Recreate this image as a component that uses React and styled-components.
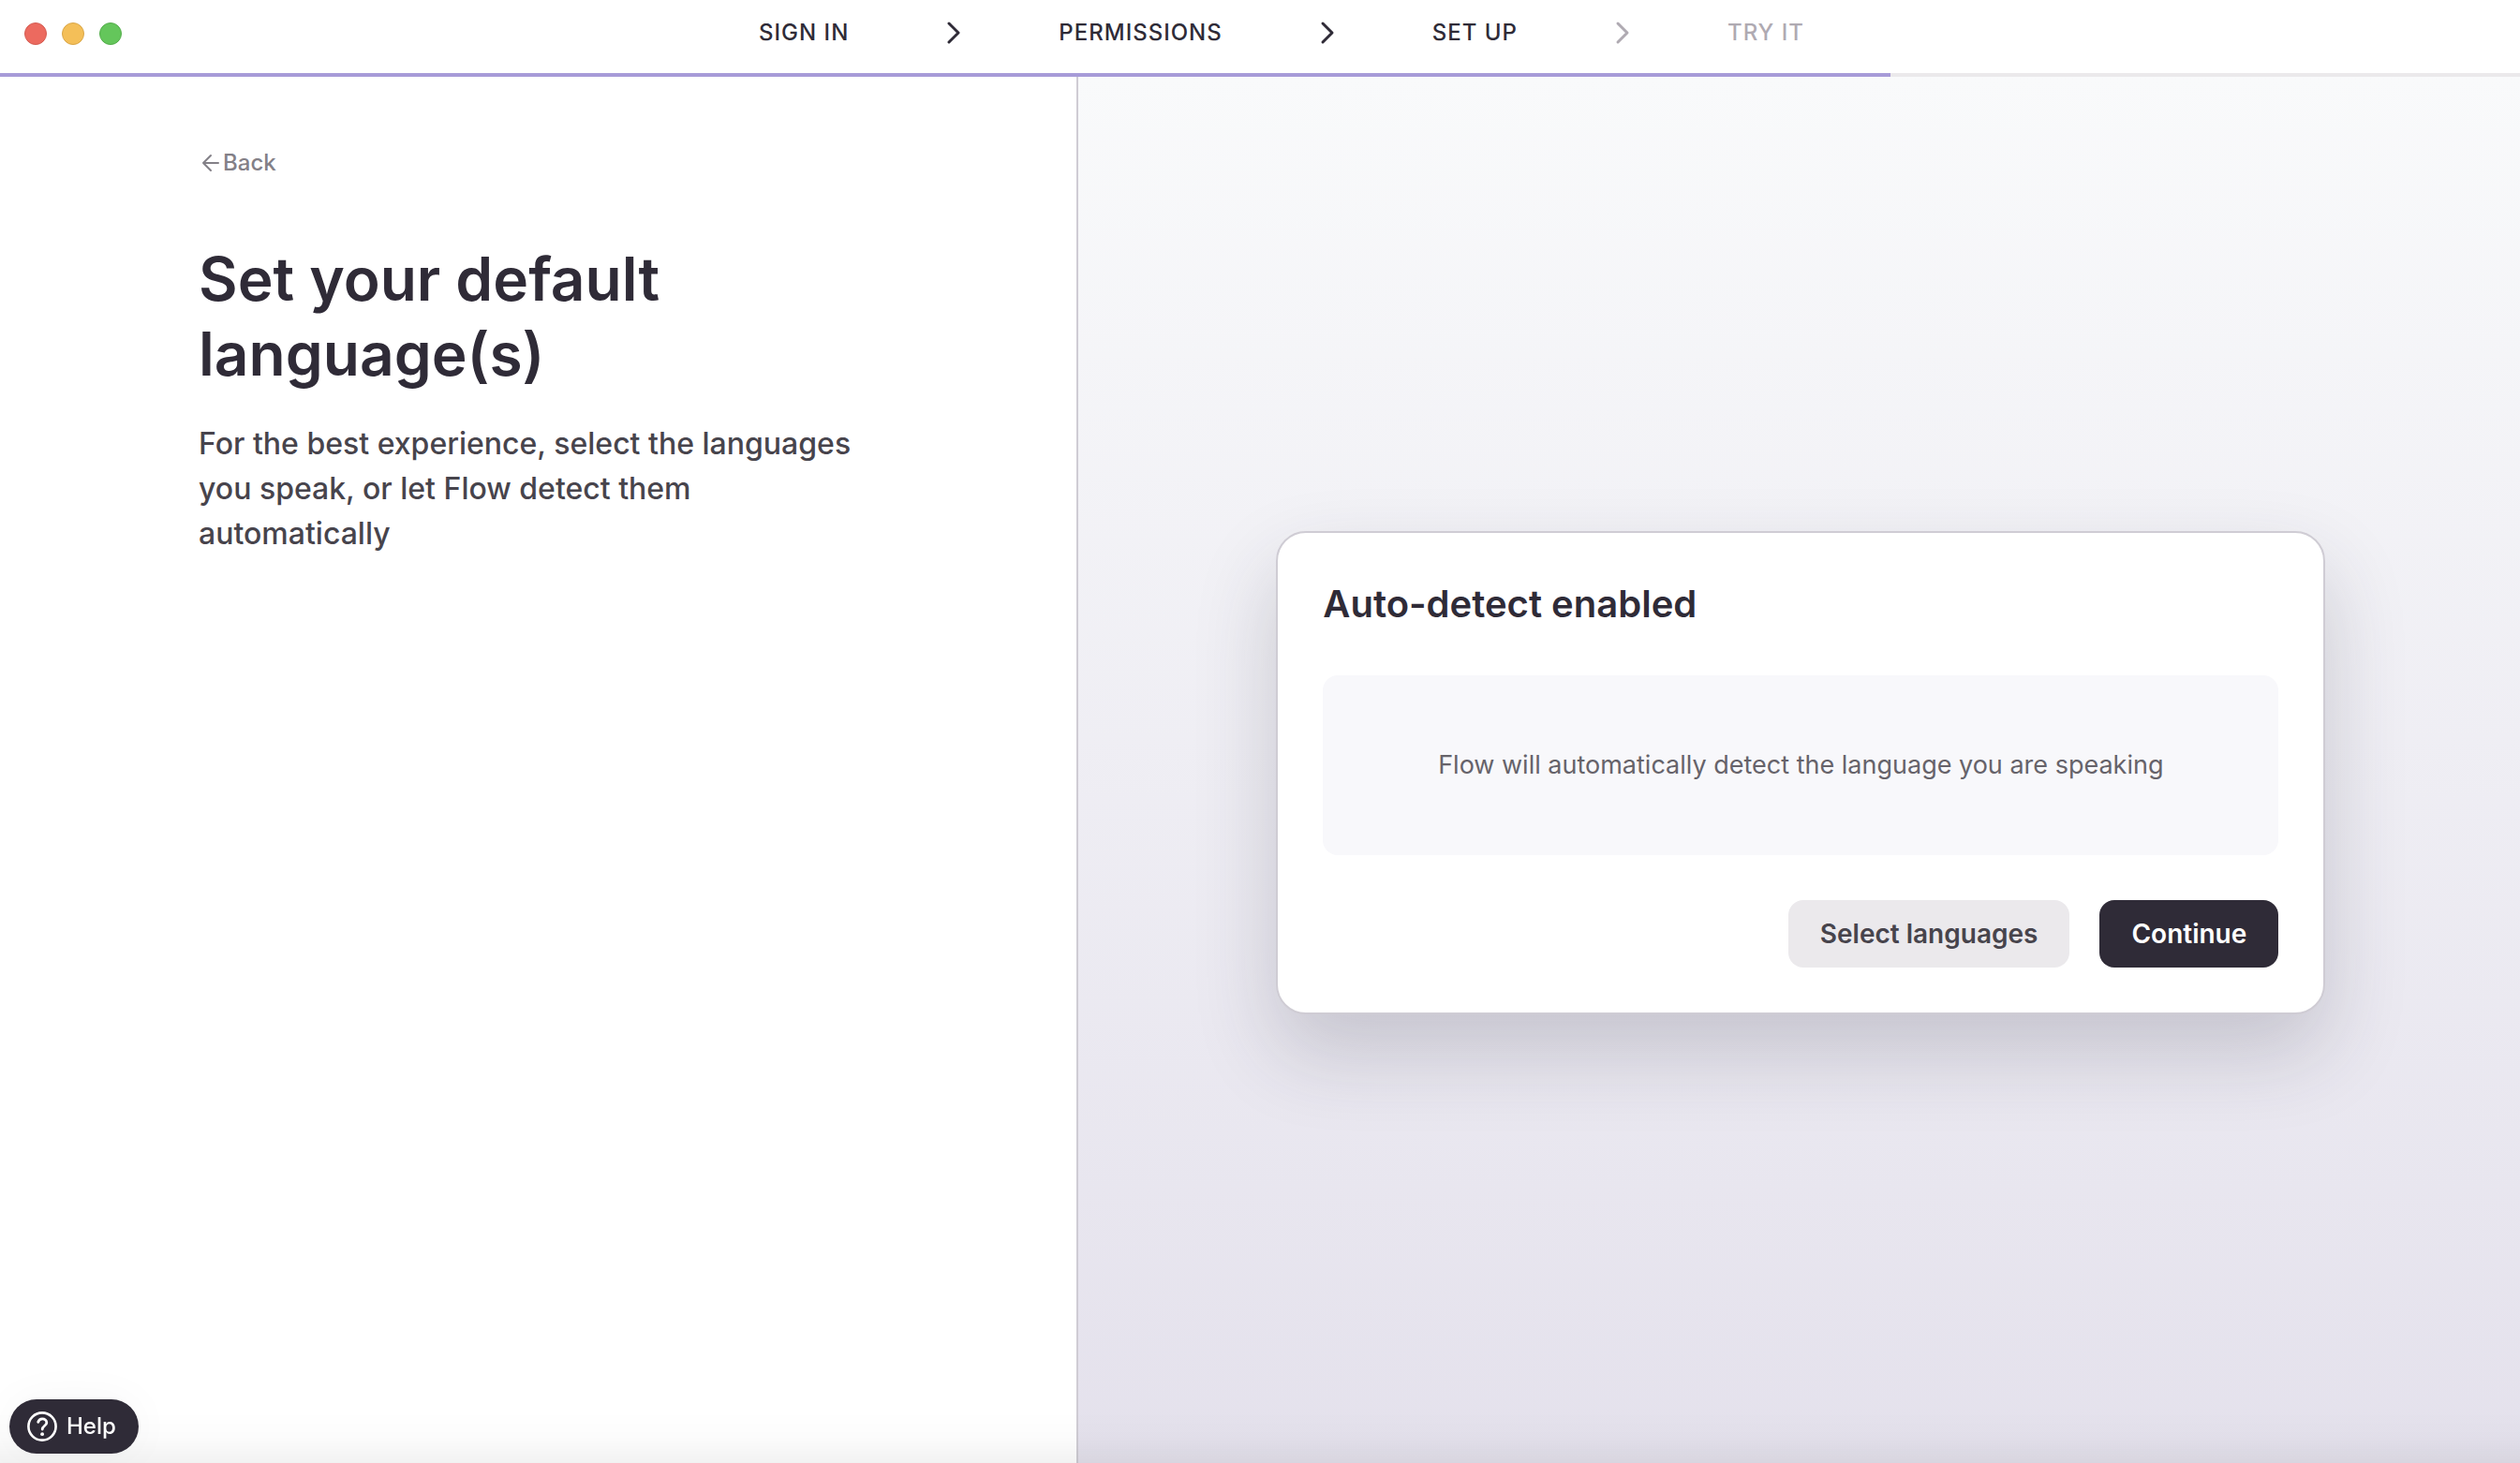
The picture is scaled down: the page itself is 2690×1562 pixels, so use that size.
import React from "react";
import styled, { createGlobalStyle } from "styled-components";

const ink = "#2f2b37";

const GlobalStyle = createGlobalStyle`
  * { box-sizing: border-box; }
  body {
    margin: 0;
    background: #fff;
    color: ${ink};
    font-family: Inter, "Liberation Sans", sans-serif;
  }
  h1, h2, p, ol { margin: 0; padding: 0; }
  button { font: inherit; border: 0; cursor: pointer; }
`;

const Page = styled.div`
  display: flex;
  flex-direction: column;
  min-height: 100vh;
`;

const Header = styled.header`
  display: grid;
  grid-template-columns: 1fr auto 1fr;
  align-items: center;
  height: 78px;
  padding: 0 26px 8px;
`;

const WindowControls = styled.div`
  display: flex;
  gap: 16px;
  padding-top: 2px;
`;

const Dot = styled.button`
  width: 24px;
  height: 24px;
  padding: 0;
  border-radius: 50%;
  background: ${(p) => p.$color};
  border: 1px solid ${(p) => p.$edge};
`;

const Steps = styled.ol`
  display: flex;
  align-items: center;
  gap: 100px;
  padding-left: 46px;
  list-style: none;
`;

const Step = styled.li`
  display: flex;
  align-items: center;
  font-size: 24px;
  line-height: 32px;
  font-weight: 500;
  letter-spacing: 1px;
  color: ${(p) => (p.$muted ? "#afaab2" : ink)};
`;

const Progress = styled.div`
  height: 4px;
  background: #ebe9eb;
`;

const ProgressFill = styled.div`
  width: 75%;
  height: 100%;
  background: #a79bd8;
`;

const Main = styled.main`
  display: flex;
  flex: 1;
`;

const Intro = styled.section`
  display: flex;
  flex-direction: column;
  align-items: flex-start;
  width: 42.7%;
  padding: 76px 212px;
`;

const BackButton = styled.button`
  display: flex;
  align-items: center;
  gap: 2px;
  padding: 0;
  background: none;
  color: #838087;
  font-size: 24px;
  line-height: 32px;
  font-weight: 500;
`;

const Title = styled.h1`
  margin-top: 68px;
  font-size: 64px;
  line-height: 80px;
  font-weight: 600;
`;

const Lead = styled.p`
  margin-top: 32px;
  color: #47444c;
  font-size: 32px;
  line-height: 48px;
  font-weight: 500;
`;

const Stage = styled.section`
  display: flex;
  flex: 1;
  align-items: center;
  justify-content: center;
  padding: 6px 0 0 4px;
  border-left: 2px solid #cfccd4;
  background: linear-gradient(#f9fafb, #e4e1ec);
`;

const Card = styled.div`
  display: flex;
  flex-direction: column;
  gap: 48px;
  width: 1120px;
  max-width: 90%;
  padding: 48px;
  border: 2px solid #cfccd4;
  border-radius: 32px;
  background: #fff;
  box-shadow: 0 40px 88px rgba(47, 43, 66, 0.2);
`;

const CardTitle = styled.h2`
  font-size: 40px;
  line-height: 56px;
  font-weight: 600;
`;

const Notice = styled.p`
  padding: 76px 32px;
  border-radius: 16px;
  background: #f8f8fb;
  color: #66636a;
  font-size: 27px;
  line-height: 40px;
  text-align: center;
`;

const Actions = styled.div`
  display: flex;
  justify-content: flex-end;
  gap: 32px;
`;

const Button = styled.button`
  padding: 16px 34px;
  border-radius: 16px;
  background: ${(p) => (p.$primary ? ink : "#ebe9ec")};
  color: ${(p) => (p.$primary ? "#fff" : "#47444c")};
  font-size: 28px;
  line-height: 40px;
  font-weight: 600;
`;

const BottomShade = styled.div`
  position: fixed;
  inset: auto 0 0;
  height: 56px;
  background: linear-gradient(transparent, rgba(0, 0, 0, 0.012) 50%, rgba(0, 0, 0, 0.05));
  pointer-events: none;
`;

const HelpButton = styled.button`
  position: fixed;
  left: 10px;
  bottom: 10px;
  display: flex;
  align-items: center;
  gap: 10px;
  padding: 13px 24px 13px 19px;
  border-radius: 29px;
  background: ${ink};
  color: #fff;
  font-size: 24px;
  line-height: 32px;
  font-weight: 500;
  box-shadow: 0 0 48px rgba(0, 0, 0, 0.04);
`;

const Chevron = () => (
  <svg width="24" height="32" viewBox="0 0 24 32" fill="none" aria-hidden="true">
    <path d="M7 6l10 10-10 10" stroke="currentColor" strokeWidth="3" strokeLinecap="round" strokeLinejoin="round" />
  </svg>
);

const ArrowLeft = () => (
  <svg width="24" height="24" viewBox="0 0 24 24" fill="none" aria-hidden="true">
    <path d="M21 12H5M13 4L5 12l8 8" stroke="currentColor" strokeWidth="2" strokeLinecap="round" strokeLinejoin="round" />
  </svg>
);

const HelpIcon = () => (
  <svg width="32" height="32" viewBox="0 0 32 32" fill="none" aria-hidden="true">
    <circle cx="16" cy="16" r="14.6" stroke="currentColor" strokeWidth="2.6" />
    <path d="M11.7 11.4c.5-2.2 2.2-3.6 4.5-3.6 2.6 0 4.6 1.7 4.6 4.1 0 3.2-4.6 3.5-4.6 7.1" stroke="currentColor" strokeWidth="2.8" strokeLinecap="round" />
    <circle cx="16.1" cy="24.2" r="1.9" fill="currentColor" />
  </svg>
);

const steps = ["SIGN IN", "PERMISSIONS", "SET UP", "TRY IT"];
const current = 2;

export default function App() {
  return (
    <Page>
      <GlobalStyle />
      <Header>
        <WindowControls>
          <Dot aria-label="Close" $color="#ec6a5f" $edge="#d45c52" />
          <Dot aria-label="Minimize" $color="#f4bf58" $edge="#d9a648" />
          <Dot aria-label="Zoom" $color="#64c65b" $edge="#54ad4b" />
        </WindowControls>
        <Steps>
          {steps.map((label, i) => (
            <React.Fragment key={label}>
              {i > 0 && (
                <Step role="presentation" $muted={i > current}>
                  <Chevron />
                </Step>
              )}
              <Step $muted={i > current}>{label}</Step>
            </React.Fragment>
          ))}
        </Steps>
      </Header>
      <Progress>
        <ProgressFill />
      </Progress>
      <Main>
        <Intro>
          <BackButton>
            <ArrowLeft />
            Back
          </BackButton>
          <Title>Set your default language(s)</Title>
          <Lead>For the best experience, select the languages you speak, or let Flow detect them automatically</Lead>
        </Intro>
        <Stage>
          <Card>
            <CardTitle>Auto-detect enabled</CardTitle>
            <Notice>Flow will automatically detect the language you are speaking</Notice>
            <Actions>
              <Button>Select languages</Button>
              <Button $primary>Continue</Button>
            </Actions>
          </Card>
        </Stage>
      </Main>
      <BottomShade />
      <HelpButton>
        <HelpIcon />
        Help
      </HelpButton>
    </Page>
  );
}
